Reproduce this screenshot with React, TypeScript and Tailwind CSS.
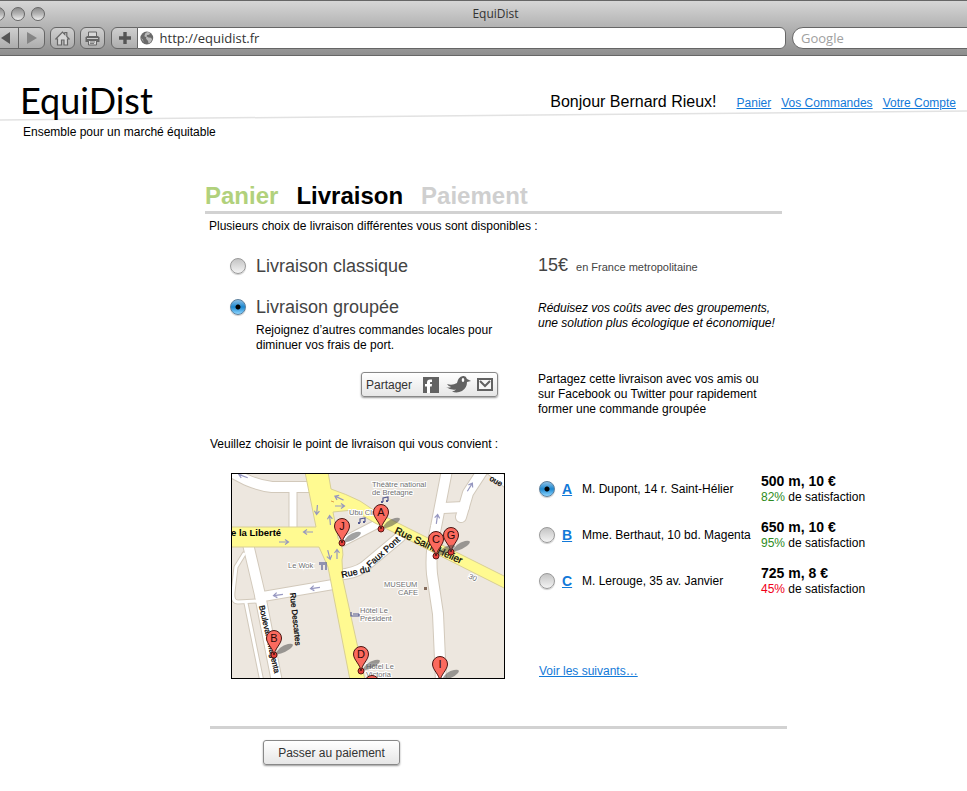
import { useState } from "react";
import type { ReactNode } from "react";

const radioClass =
  "size-4 shrink-0 appearance-none rounded-full border border-[#999] bg-linear-to-b from-[#c4c4c4] via-[#dcdcdc] to-[#f4f4f4] shadow-[0_1px_1px_rgba(0,0,0,0.2)] checked:border-[#5c7f9c] checked:bg-[radial-gradient(circle_at_center,#000_0,#000_2px,transparent_3px),linear-gradient(#8cbfe4,#1b87d0_50%,#8fd6ff)]";
const linkClass = "text-[#1279d8] underline";
const toolClass =
  "flex h-[22px] items-center justify-center border border-[#666] bg-linear-to-b from-[#cfcfcf] to-[#adadad]";
const buttonClass =
  "flex h-[25px] items-center rounded-[3px] border border-[#888] bg-linear-to-b from-white to-[#e6e6e6] text-xs text-[#333] shadow-[0_1px_2px_rgba(0,0,0,0.4)]";

function Light() {
  return (
    <span className="size-[14px] rounded-full border border-[#666] bg-linear-to-b from-[#8c8c8c] via-[#b5b5b5] to-[#f0f0f0]" />
  );
}

function BrowserBar() {
  return (
    <div className="h-14 overflow-hidden border-t border-b border-[#666] bg-linear-to-b from-[#d6d6d6] to-[#8e8e8e] font-['Open_Sans',sans-serif]">
      <div className="grid h-[26px] grid-cols-[1fr_auto_1fr] items-center">
        <div className="-ml-[9px] flex gap-[6px]">
          <Light />
          <Light />
          <Light />
        </div>
        <div className="pl-6 text-xs text-[#333]">EquiDist</div>
      </div>
      <div className="flex h-[22px]">
        <div className="-ml-2 flex">
          <button type="button" aria-label="Précédent" className={`${toolClass} w-[27px]`}>
            <svg width="10" height="12" viewBox="0 0 10 12"><path d="M9 0v12L0 6z" fill="#555" /></svg>
          </button>
          <button type="button" aria-label="Suivant" className={`${toolClass} -ml-px w-[27px] rounded-r-md`}>
            <svg width="10" height="12" viewBox="0 0 10 12"><path d="M0 0v12L10 6z" fill="#858585" /></svg>
          </button>
        </div>
        <button type="button" aria-label="Accueil" className={`${toolClass} ml-[5px] w-[25px] rounded-md`}>
          <svg width="15" height="15" viewBox="0 0 15 15" fill="#d6d6d6" stroke="#666" strokeWidth="1.2">
            <path d="M.8 8 7.5 1 9.8 3.400V1.500h2v4L14.200 8h-1.700v6H9V9H6.500v5h-4V8z" />
          </svg>
        </button>
        <button type="button" aria-label="Imprimer" className={`${toolClass} ml-[5px] w-[25px] rounded-md`}>
          <svg width="15" height="15" viewBox="0 0 15 15">
            <path d="M3.500 5V1h8v4" fill="#d8d8d8" stroke="#666" />
            <path d="M2 5h11l1.500 1.500V11H.5V6.500z" fill="#666" />
            <path d="M2 7.500h11" stroke="#ccc" />
            <path d="M3.500 9.500h8v4.500h-8z" fill="#d8d8d8" stroke="#666" />
            <path d="M5 11h5M5 12.500h4" stroke="#666" strokeWidth=".8" />
          </svg>
        </button>
        <button type="button" aria-label="Ajouter un signet" className={`${toolClass} ml-[6px] w-[27px] rounded-l-md`}>
          <svg width="12" height="12" viewBox="0 0 12 12"><path d="M6 0v12M0 6h12" stroke="#555" strokeWidth="3.400" /></svg>
        </button>
        <label className="-ml-px flex flex-1 items-center gap-[6px] rounded-r-md border border-[#666] bg-white pl-[2px]">
          <svg width="14" height="14" viewBox="0 0 14 14" aria-hidden="true">
            <circle cx="7" cy="7" r="6.600" fill="#6a6a6a" />
            <path d="M7.500.8l3 .8-1 2-2.200.2-.6 1.400 2 1.300 2.600.3 1.200 1.400-1.500 3.100-2.200 1.400-.5-2.600-2-2.200.2-1.700-2-1 .8-2.800zM1 7l2 1.500.8 3z" fill="#b9b9b9" />
          </svg>
          <input aria-label="Adresse" defaultValue="http://equidist.fr" className="w-full bg-transparent text-[13px] text-[#333] outline-none" />
        </label>
        <input
          aria-label="Recherche"
          placeholder="Google"
          className="-mr-3 ml-[6px] w-[187px] rounded-full border border-[#666] bg-white pl-2 text-[13px] outline-none placeholder:text-[#a0a0a0]"
        />
      </div>
    </div>
  );
}

function Pin({ x, y, letter }: { x: number; y: number; letter: string }) {
  return (
    <g transform={`translate(${x} ${y})`}>
      <path d="M1 17Q5 8 14 6q7-1 4 3-4 5-17 8z" fill="#444" opacity=".5" />
      <circle cy="17" r="3" fill="#e4403a" stroke="#5c1512" />
      <path d="M0 17C-1 10-7.500 6-7.500 0a7.500 7.500 0 0 1 15 0C7.500 6 1 10 0 17z" fill="#fb6a5e" stroke="#4a1512" />
      <text y="4" textAnchor="middle" fontSize="11" fill="#2a0808">{letter}</text>
    </g>
  );
}

const streets = [
  { d: "M-4 -4C10 4 22 11 40 13L78 13", w: 10 },
  { d: "M61 14V58", w: 7 },
  { d: "M16 70L28 121 45 208", w: 10 },
  { d: "M28 123L104 110", w: 9 },
  { d: "M12 80L4 93 1 118Q0 128 6 128L26 127", w: 3 },
  { d: "M14 129L30 208", w: 3 },
  { d: "M106 101Q124 99 132 93L168 63", w: 10 },
  { d: "M110 68L147 49", w: 8 },
  { d: "M215 -4L204 53Q198 78 200 100L206 140 209 208", w: 10 },
  { d: "M251 -4L236 19 229 43", w: 10 },
  { d: "M211 34L232 33", w: 10 },
  { d: "M256 -6L280 13", w: 9 },
];

const arrows = [
  { x: 11, y: 2, r: 200 }, { x: 76, y: 58, r: 180 }, { x: 52, y: 68, r: 0 },
  { x: 85, y: 36, r: 95 }, { x: 98, y: 46, r: -95 }, { x: 107, y: 24, r: 205 },
  { x: 108, y: 32, r: 0 }, { x: 97, y: 81, r: 75 }, { x: 105, y: 80, r: -90 },
  { x: 46, y: 121, r: 172 }, { x: 83, y: 114, r: 172 }, { x: 205, y: 45, r: -82 },
  { x: 238, y: 13, r: -58 },
];

function CityMap() {
  const primary =
    "M73 -2L84 53H-2V73H87L96 93 118 206H133L111 106 110 86Q113 76 106 64L101 38 121 36 143 49 276 116V104L146 39 128 27Q114 20 99 15L96 -2z";
  return (
    <svg
      viewBox="0 0 272 204"
      className="ml-[26px] h-[206px] w-[274px] border border-black bg-[#ede7df] font-['Liberation_Sans',Arial,sans-serif]"
      role="img"
      aria-label="Carte des points de livraison"
    >
      <g fill="none" stroke="#d2c9bb" strokeLinecap="round" strokeLinejoin="round">
        {streets.map((s) => <path key={s.d} d={s.d} strokeWidth={s.w + 2} />)}
      </g>
      <g fill="none" stroke="#fff" strokeLinecap="round" strokeLinejoin="round">
        {streets.map((s) => <path key={s.d} d={s.d} strokeWidth={s.w} />)}
      </g>
      <path d={primary} fill="#fffa91" stroke="#d8cf94" />
      <path d="M99 27l3 1" stroke="#e0a04c" />
      <g fill="none" stroke="#9697c0" strokeWidth="1.200">
        {arrows.map((a) => (
          <path key={`${a.x}-${a.y}`} d="M-5 0H4M1-2.500L4.500 0 1 2.500" transform={`translate(${a.x} ${a.y}) rotate(${a.r})`} />
        ))}
      </g>
      <g fontSize="7.500" fill="#707070" stroke="#fff" strokeWidth="2" paintOrder="stroke">
        <text x="140" y="13">Théâtre national</text>
        <text x="140" y="21">de Bretagne</text>
        <text x="117" y="41">Ubu Club</text>
        <text x="56" y="94">Le Wok</text>
        <text x="152" y="113">MUSEUM</text>
        <text x="166" y="121">CAFE</text>
        <text x="128" y="139">Hôtel Le</text>
        <text x="128" y="147">Président</text>
        <text x="134" y="195">Hôtel Le</text>
        <text x="134" y="203">Victoria</text>
        <text x="236" y="104" transform="rotate(25 236 104)">30</text>
      </g>
      <g fill="none" stroke="#555b91" strokeWidth="1.200">
        <path d="M151 28v-4l5-1v4M128 49v-4l5-1v4M88 88v3M90 88v3M92 88v3M90 91v5M94 88v8M119 138v4h8v-2M121 140h6" />
        <path d="M149 28h2M154 27h2M126 49h2M131 48h2" strokeWidth="2" />
      </g>
      <path d="M192 113h3v3h-3z" fill="#846b5b" />
      <g fontSize="8" fill="#000" stroke="#fff" strokeOpacity=".6" strokeWidth="2" paintOrder="stroke">
        <text x="-1" y="62" fontSize="9.500" fontWeight="bold" strokeOpacity="0">e la Liberté</text>
        <g fill="#000" stroke="#000" strokeOpacity="1" strokeWidth=".25">
          <text transform="translate(162 59) rotate(25)" fontSize="10">Rue Saint-Hélier</text>
          <text transform="translate(110 104) rotate(-13)" fontSize="9">Rue du</text>
          <text transform="translate(138 94) rotate(-42)" fontSize="9">Faux Pont</text>
          <text transform="translate(27 132) rotate(77)">Boulevard Magenta</text>
          <text transform="translate(58 119) rotate(84)">Rue Descartes</text>
          <text transform="translate(257 6) rotate(30)">oue</text>
        </g>
      </g>
      <Pin x={149} y={38} letter="A" />
      <Pin x={110} y={52} letter="J" />
      <Pin x={219} y={61} letter="G" />
      <Pin x={204} y={65} letter="C" />
      <Pin x={42} y={164} letter="B" />
      <Pin x={129} y={180} letter="D" />
      <Pin x={208} y={190} letter="I" />
      <Pin x={140} y={209} letter="" />
    </svg>
  );
}

const points = [
  { id: "A", name: "M. Dupont, 14 r. Saint-Hélier", price: "500 m, 10 €", score: "82%", tone: "text-[#2e8b22]" },
  { id: "B", name: "Mme. Berthaut, 10 bd. Magenta", price: "650 m, 10 €", score: "95%", tone: "text-[#2e8b22]" },
  { id: "C", name: "M. Lerouge, 35 av. Janvier", price: "725 m, 8 €", score: "45%", tone: "text-[#f00018]" },
];

function Row({ children, className }: { children: ReactNode; className: string }) {
  return <div className={`grid grid-cols-[333px_1fr] ${className}`}>{children}</div>;
}

export default function App() {
  const [mode, setMode] = useState("groupee");
  const [point, setPoint] = useState("A");
  return (
    <div className="min-h-screen bg-white font-['Liberation_Sans',Arial,sans-serif] text-xs leading-[15px] text-black">
      <BrowserBar />
      <header className="relative pt-5 pr-[11px] pl-5">
        <svg className="absolute top-[54px] left-0 h-[11px] w-full" viewBox="0 0 967 11" preserveAspectRatio="none" aria-hidden="true">
          <path d="M0 10L967 1" stroke="#e2e2e2" strokeWidth="1.500" />
        </svg>
        <div className="relative flex h-12 items-center justify-between">
          <h1 className="font-['Lato',sans-serif] text-[36px] leading-10">EquiDist</h1>
          <div className="flex items-baseline pt-1">
            <p className="mr-5 text-base">Bonjour Bernard Rieux!</p>
            <nav className="flex gap-[10px]">
              <a href="#panier" className={linkClass}>Panier</a>
              <a href="#commandes" className={linkClass}>Vos Commandes</a>
              <a href="#compte" className={linkClass}>Votre Compte</a>
            </nav>
          </div>
        </div>
        <p className="pt-px pl-[3px]">Ensemble pour un marché équitable</p>
      </header>

      <main className="pt-[41px] pb-6 pl-[205px]">
        <ol className="flex w-[577px] gap-[18px] border-b-[3px] border-[#d2d2d2] text-2xl leading-[30px] font-bold">
          <li className="text-[#b1d17c]">Panier</li>
          <li>Livraison</li>
          <li className="text-[#cfcfcf]">Paiement</li>
        </ol>
        <p className="pt-[5px] pl-1">Plusieurs choix de livraison différentes vous sont disponibles :</p>

        <Row className="mt-[21px] h-5 items-center text-lg leading-5 text-[#444]">
          <label className="flex items-center gap-[10px] pl-[25px]">
            <input type="radio" name="mode" checked={mode === "classique"} onChange={() => setMode("classique")} className={radioClass} />
            Livraison classique
          </label>
          <p>15€ <span className="ml-[3px] text-[11px]">en France metropolitaine</span></p>
        </Row>
        <Row className="mt-[22px]">
          <div className="pl-[25px]">
            <label className="flex items-center gap-[10px] text-lg leading-5 text-[#444]">
              <input type="radio" name="mode" checked={mode === "groupee"} onChange={() => setMode("groupee")} className={radioClass} />
              Livraison groupée
            </label>
            <p className="pt-[6px] pl-[26px]">Rejoignez d’autres commandes locales pour<br />diminuer vos frais de port.</p>
          </div>
          <p className="pt-1 italic">Réduisez vos coûts avec des groupements,<br />une solution plus écologique et économique!</p>
        </Row>
        <Row className="mt-[19px]">
          <div className="pl-[156px]">
            <button type="button" className={`${buttonClass} w-[137px] pl-1`}>
              Partager
              <svg className="ml-[11px]" width="16" height="16" viewBox="0 0 16 16" aria-hidden="true">
                <path d="M0 0h16v16H0z" fill="#626262" />
                <path d="M4 16V9.500H2V7h2V5.500q0-3 3-3h2v2.500H7.500Q7 5 7 5.700V7h2L8.700 9.500H7V16z" fill="#fff" />
              </svg>
              <svg className="ml-[6px]" width="26" height="17" viewBox="0 0 26 17" aria-hidden="true">
                <path d="M1 11q3 1 5 0Q3 10 2 8q5 2 10-1 1-6 6-7 3-.2 4 3l4 2-4 1q0 6-5 9-5 2.500-10 .5 3-.5 4-2-5 1-10-2.500z" fill="#626262" />
                <ellipse cx="18" cy="4" rx="1.300" ry="2" fill="#fff" />
              </svg>
              <svg className="ml-[6px]" width="16" height="13" viewBox="0 0 16 13" aria-hidden="true">
                <path d="M1 1h14v11H1z" fill="#f7f7f7" stroke="#626262" strokeWidth="2" />
                <path d="M3 3l5 5 5-5" fill="none" stroke="#626262" strokeWidth="2" />
              </svg>
            </button>
          </div>
          <p>Partagez cette livraison avec vos amis ou<br />sur Facebook ou Twitter pour rapidement<br />former une commande groupée</p>
        </Row>

        <p className="mt-5 pl-[5px]">Veuillez choisir le point de livraison qui vous convient :</p>
        <Row className="mt-[21px]">
          <CityMap />
          <div className="flex flex-col pl-px">
            <ul className="flex flex-col gap-[14px]">
              {points.map((p) => (
                <li key={p.id} className="grid h-8 grid-cols-[16px_27px_179px_1fr] items-center">
                  <input
                    id={`point-${p.id}`}
                    type="radio"
                    name="point"
                    checked={point === p.id}
                    onChange={() => setPoint(p.id)}
                    className={radioClass}
                  />
                  <a href={`#point-${p.id}`} className={`${linkClass} pl-[7px] text-sm leading-4 font-bold`}>{p.id}</a>
                  <label htmlFor={`point-${p.id}`}>{p.name}</label>
                  <div>
                    <p className="text-sm leading-4 font-bold">{p.price}</p>
                    <p className="leading-4"><span className={p.tone}>{p.score}</span> de satisfaction</p>
                  </div>
                </li>
              ))}
            </ul>
            <a href="#suivants" className={`${linkClass} mt-auto self-start`}>Voir les suivants…</a>
          </div>
        </Row>

        <hr className="mt-[47px] ml-[5px] w-[577px] border-t-[3px] border-[#d2d2d2]" />
        <button type="button" className={`${buttonClass} mt-[11px] ml-[58px] w-[137px] justify-center`}>Passer au paiement</button>
      </main>
    </div>
  );
}
